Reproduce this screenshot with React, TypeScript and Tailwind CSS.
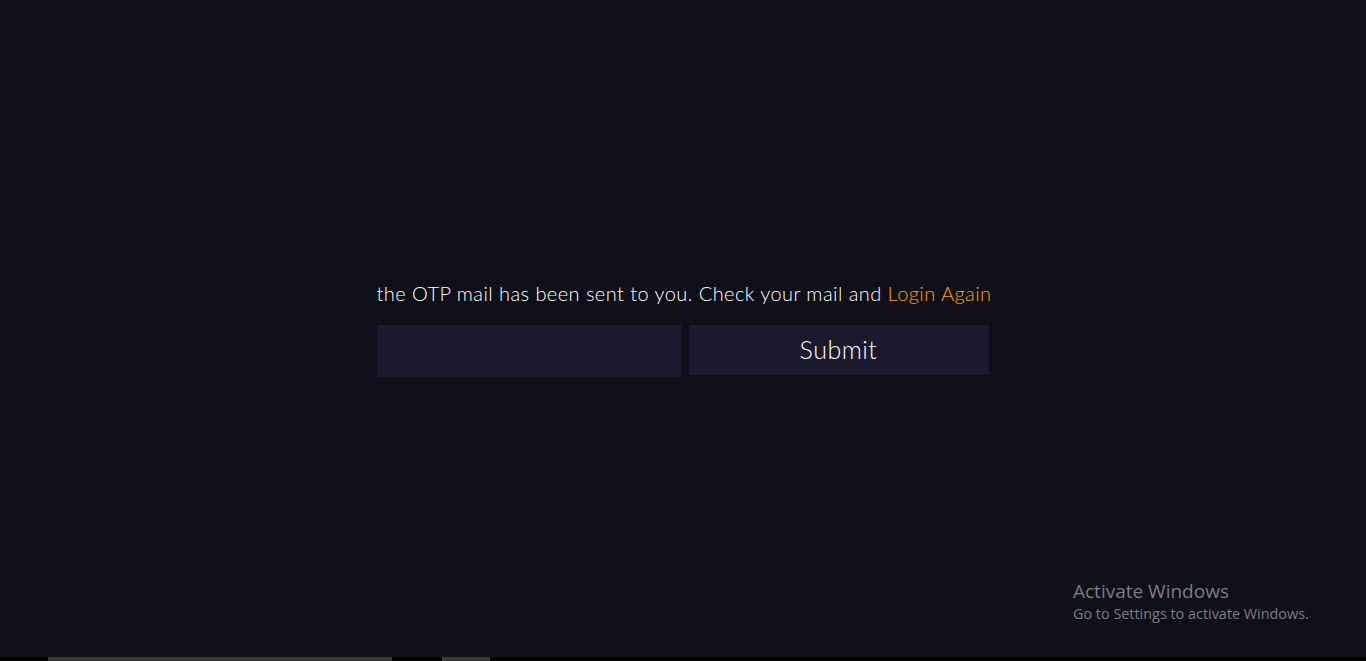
import React, { useState } from 'react';

const App: React.FC = () => {
  const [otp, setOtp] = useState('');

  return (
    <div className="relative w-full h-[661px] flex flex-col bg-[#0f0f19] overflow-hidden" style={{ fontFamily: 'Lato, "Open Sans", sans-serif' }}>
      <div className="flex-1 flex items-center justify-center">
        <div className="flex flex-col w-[613px]">
          <p className="text-[20px] font-light text-white leading-[24px] whitespace-nowrap tracking-[0.44px]">
            the OTP mail has been sent to you. Check your mail and{' '}
            <a href="#" className="text-[#ffa000]">Login Again</a>
          </p>
          <form className="flex items-start gap-2 mt-[20px]" onSubmit={e => e.preventDefault()}>
            <input
              value={otp}
              onChange={e => setOtp(e.target.value)}
              className="w-[304px] h-[52px] bg-[#1b1a2c] text-white px-3 outline-none"
            />
            <button type="submit" className="w-[300px] h-[50px] bg-[#1b1a2c] text-white text-[25px] font-light tracking-[0.5px]">
              Submit
            </button>
          </form>
        </div>
      </div>

      {/* windows watermark */}
      <div className="absolute left-[1073px] top-[578px] text-[#7c7c84]" style={{ fontFamily: '"Open Sans", "Noto Sans", sans-serif' }}>
        <div className="text-[19px] leading-[26px]">Activate Windows</div>
        <div className="text-[14.4px] leading-[20px]">Go to Settings to activate Windows.</div>
      </div>

      {/* bottom strip */}
      <div className="h-[4px] bg-[#050505] flex">
        <div className="ml-[48px] w-[344px] bg-[#3a3a3a]" />
        <div className="ml-[50px] w-[48px] bg-[#3a3a3a]" />
      </div>
    </div>
  );
};

export default App;
